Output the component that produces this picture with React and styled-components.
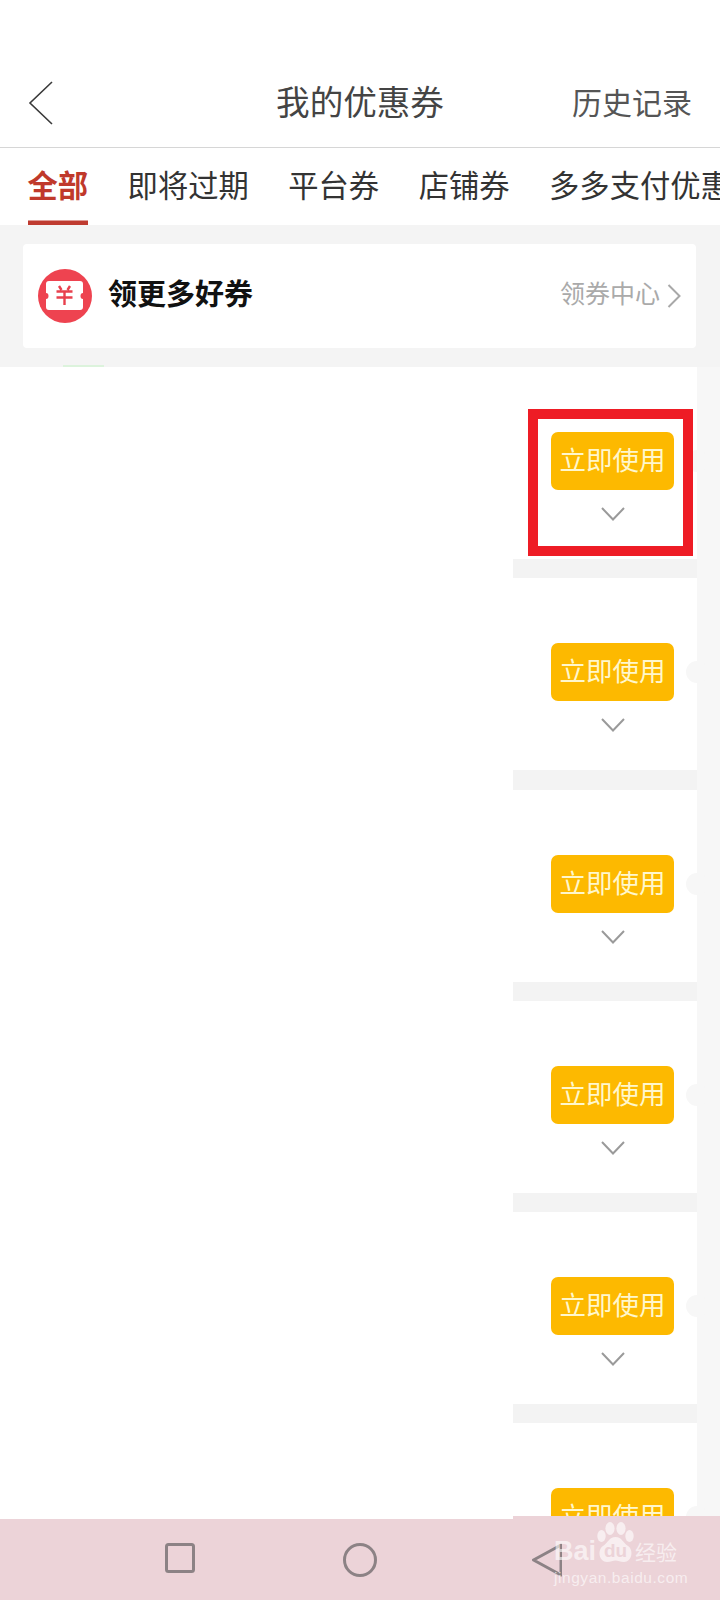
import React from 'react'
import styled, { createGlobalStyle } from 'styled-components'

const GlobalStyle = createGlobalStyle`
    html, body {
        margin: 0;
        padding: 0;
        background: #f4f4f4;
    }
    * {
        box-sizing: border-box;
    }
`

const tabs = ['全部', '即将过期', '平台券', '店铺券', '多多支付优惠券']
const coupons = [1, 2, 3, 4, 5, 6]

function App() {
    return (
        <Page>
            <GlobalStyle />
            <Header>
                <BackIcon viewBox="0 0 26 44">
                    <path d="M24 1 L2 22 L24 43" />
                </BackIcon>
                <Title>我的优惠券</Title>
                <History>历史记录</History>
            </Header>
            <Tabs>
                {tabs.map((tab, i) => (
                    <Tab key={tab} $active={i === 0}>{tab}</Tab>
                ))}
            </Tabs>
            <Content>
                <PromoCard>
                    <svg width="54" height="54" viewBox="0 0 54 54">
                        <circle cx="27" cy="27" r="27" fill="#ee4350" />
                        <path
                            fill="#fff"
                            d="M11 12 H42 a3 3 0 0 1 3 3 V24 a2.5 3 0 0 0 0 6 V38 a3 3 0 0 1 -3 3 H11 a3 3 0 0 1 -3 -3 V30 a2.5 3 0 0 0 0 -6 V15 a3 3 0 0 1 3 -3 Z"
                        />
                        <path
                            fill="none"
                            stroke="#e8404d"
                            strokeWidth="2.4"
                            d="M21 17 L23.5 21 M32 17 L29.5 21 M18.5 22.5 H34.5 M18.5 28.5 H34.5 M26.5 22.5 V36"
                        />
                    </svg>
                    <PromoText>领更多好券</PromoText>
                    <PromoLink>领券中心</PromoLink>
                    <LinkArrow viewBox="0 0 14 24">
                        <path d="M1.5 1 L12.5 12 L1.5 23" />
                    </LinkArrow>
                </PromoCard>
                <List>
                    <BlankColumn />
                    <Coupons>
                        {coupons.map(id => (
                            <Coupon key={id}>
                                <UseButton>立即使用</UseButton>
                                <ExpandIcon viewBox="0 0 24 14">
                                    <path d="M1 1 L12 12.5 L23 1" />
                                </ExpandIcon>
                                <Notch />
                                {id === 1 && <Highlight />}
                            </Coupon>
                        ))}
                    </Coupons>
                </List>
            </Content>
            <NavBar>
                <NavIcon width="30" height="30" viewBox="0 0 30 30">
                    <rect x="1.5" y="1.5" width="27" height="27" rx="2" />
                </NavIcon>
                <NavIcon $gap={148} width="34" height="34" viewBox="0 0 34 34">
                    <circle cx="17" cy="17" r="15.5" />
                </NavIcon>
                <NavIcon $gap={155} width="30" height="34" viewBox="0 0 30 34">
                    <path d="M29 2 L1.5 17 L29 32 Z" strokeLinejoin="round" />
                </NavIcon>
                <Watermark>
                    <WatermarkLogo>
                        <span>Bai</span>
                        <Paw>
                            <svg width="37" height="41" viewBox="0 0 37 41">
                                <ellipse cx="4.5" cy="14" rx="4.2" ry="6" />
                                <ellipse cx="13" cy="6.5" rx="4.6" ry="6.5" />
                                <ellipse cx="24" cy="6.5" rx="4.6" ry="6.5" />
                                <ellipse cx="32.5" cy="14" rx="4.2" ry="6" />
                                <path d="M18.5 15 C25 15 26 21 31 24 C37 28 35 40 27 40 C23 40 21 38.5 18.5 38.5 C16 38.5 14 40 10 40 C2 40 0 28 6 24 C11 21 12 15 18.5 15 Z" />
                            </svg>
                            <PawText>du</PawText>
                        </Paw>
                        <WatermarkCn>经验</WatermarkCn>
                    </WatermarkLogo>
                    <WatermarkUrl>jingyan.baidu.com</WatermarkUrl>
                </Watermark>
            </NavBar>
        </Page>
    )
}

export default App

const Page = styled.div`
    width: 720px;
    height: 1600px;
    display: flex;
    flex-direction: column;
    overflow: hidden;
    background: #f4f4f4;
    font-family: "Noto Sans CJK SC", "Noto Sans", sans-serif;
`

const Header = styled.div`
    height: 148px;
    flex-shrink: 0;
    padding: 58px 28px 0;
    display: grid;
    grid-template-columns: 1fr auto 1fr;
    align-items: center;
    background: #fff;
    border-bottom: 1px solid #d6d6d6;
`

const BackIcon = styled.svg`
    width: 26px;
    height: 44px;

    path {
        fill: none;
        stroke: #3a3a3a;
        stroke-width: 1.6;
    }
`

const Title = styled.div`
    margin-top: -3px;
    font-size: 33.6px;
    line-height: 46px;
    color: #444;
`

const History = styled.div`
    justify-self: end;
    margin-top: -4px;
    font-size: 30px;
    line-height: 46px;
    color: #555;
`

const Tabs = styled.div`
    height: 77px;
    flex-shrink: 0;
    padding-left: 27.5px;
    display: flex;
    gap: 39.5px;
    background: #fff;
    overflow: hidden;
    white-space: nowrap;
`

const Tab = styled.div`
    display: flex;
    align-items: center;
    padding-bottom: 6px;
    font-size: 30.3px;
    color: ${props => props.$active ? '#c0392b' : '#333'};
    font-weight: ${props => props.$active ? 700 : 400};
    box-shadow: ${props => props.$active ? 'inset 0 -4.5px 0 #bf3b30' : 'none'};
`

const Content = styled.div`
    flex: 1;
    min-height: 0;
    padding-top: 19px;
    overflow: hidden;
`

const PromoCard = styled.div`
    height: 104px;
    margin: 0 24px 19px 23px;
    padding: 0 15px;
    display: flex;
    align-items: center;
    background: #fff;
    border-radius: 4px;
`

const PromoText = styled.div`
    margin-left: 16px;
    margin-top: -8px;
    font-size: 29px;
    font-weight: 700;
    color: #111;
`

const PromoLink = styled.div`
    margin-left: auto;
    margin-top: -8px;
    font-size: 25px;
    color: #aaa;
`

const LinkArrow = styled.svg`
    width: 14px;
    height: 24px;
    margin-left: 7px;

    path {
        fill: none;
        stroke: #a8a8a8;
        stroke-width: 2;
    }
`

const List = styled.div`
    display: flex;
    padding-right: 23px;
    background: #f7f7f7;
`

const BlankColumn = styled.div`
    position: relative;
    width: 513px;
    background: #fff;

    &::before {
        content: '';
        position: absolute;
        top: -2px;
        left: 63px;
        width: 41px;
        height: 2px;
        background: #dcf3dc;
    }
`

const Coupons = styled.div`
    flex: 1;
    display: flex;
    flex-direction: column;
    gap: 19.3px;
    background: #f3f3f3;
`

const Coupon = styled.div`
    position: relative;
    height: 192px;
    flex-shrink: 0;
    padding: 65px 0 0 38px;
    background: #fff;
`

const UseButton = styled.div`
    width: 123px;
    height: 58px;
    padding-bottom: 5px;
    display: flex;
    align-items: center;
    justify-content: center;
    background: #fdb900;
    border-radius: 7px;
    font-size: 26.5px;
    color: #fff7cc;
    white-space: nowrap;
`

const ExpandIcon = styled.svg`
    display: block;
    width: 24px;
    height: 14px;
    margin: 17px 0 0 50px;

    path {
        fill: none;
        stroke: #9a9a9a;
        stroke-width: 2;
    }
`

const Notch = styled.div`
    position: absolute;
    top: 83px;
    right: -11px;
    width: 22px;
    height: 22px;
    border-radius: 50%;
    background: #f7f7f7;
`

const Highlight = styled.div`
    position: absolute;
    top: 42px;
    left: 15px;
    width: 165px;
    height: 147px;
    border: 10px solid #ee1c25;
`

const NavBar = styled.div`
    position: relative;
    height: 81px;
    flex-shrink: 0;
    padding: 24px 0 0 165px;
    display: flex;
    align-items: flex-start;
    background: #ecd3d8;

    &::before {
        content: '';
        position: absolute;
        top: -3px;
        left: 513px;
        right: 0;
        height: 3px;
        background: #ecd3d8;
    }
`

const NavIcon = styled.svg`
    flex-shrink: 0;
    margin-left: ${props => props.$gap || 0}px;

    rect, circle, path {
        fill: none;
        stroke: #8c8285;
        stroke-width: 3;
    }
`

const Watermark = styled.div`
    position: absolute;
    top: 2px;
    left: 554px;
    width: 128px;
    color: rgba(255, 255, 255, 0.62);
    font-family: "Liberation Sans", sans-serif;
`

const WatermarkLogo = styled.div`
    display: flex;
    align-items: flex-end;
    height: 42px;
    font-size: 27px;
    font-weight: 700;
    line-height: 24px;
`

const Paw = styled.div`
    position: relative;
    width: 37px;
    height: 41px;
    margin-left: 1px;

    svg {
        display: block;
        fill: rgba(255, 255, 255, 0.62);
    }
`

const PawText = styled.div`
    position: absolute;
    left: 4px;
    bottom: 3px;
    width: 29px;
    text-align: center;
    font-size: 19px;
    line-height: 18px;
    color: #ecd3d8;
`

const WatermarkCn = styled.div`
    margin-left: 1px;
    font-family: "Noto Sans CJK SC", sans-serif;
    font-size: 21px;
    font-weight: 400;
    white-space: nowrap;
`

const WatermarkUrl = styled.div`
    margin-top: 6px;
    font-size: 15.5px;
    line-height: 18px;
    letter-spacing: 0.55px;
    white-space: nowrap;
`
